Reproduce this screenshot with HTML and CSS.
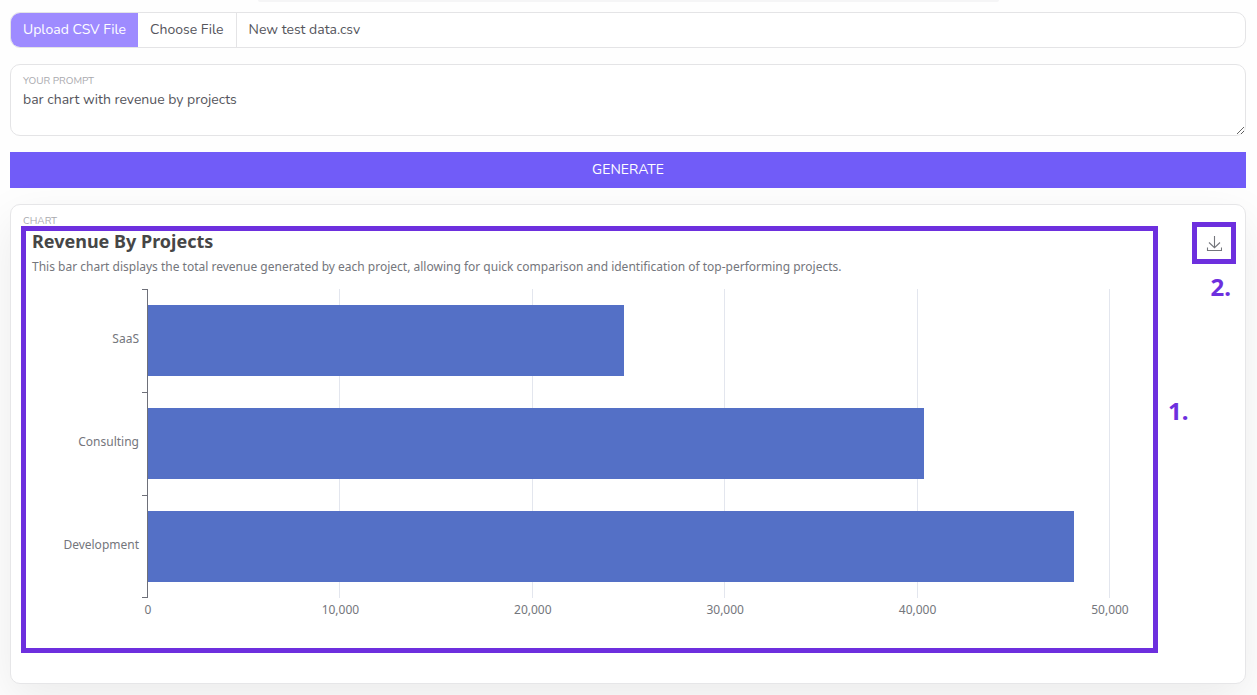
FILE: index.html
```html
<!DOCTYPE html>
<html lang="en">
<head>
<meta charset="utf-8">
<meta name="viewport" content="width=device-width, initial-scale=1">
<title>Chart generator</title>
<link rel="stylesheet" href="styles.css">
</head>
<body>
<div class="top-edge"></div>
<main class="page">
  <div class="upload">
    <label class="upload-label" for="csv">Upload CSV File</label>
    <input class="upload-input" type="file" id="csv" accept=".csv">
    <button class="upload-button" type="button">Choose File</button>
    <span class="upload-name">New test data.csv</span>
  </div>
  <div class="prompt">
    <label class="caption" for="prompt">YOUR PROMPT</label>
    <textarea class="prompt-text" id="prompt">bar chart with revenue by projects</textarea>
  </div>
  <button class="generate" type="button">GENERATE</button>
  <section class="card">
    <span class="caption card-caption">CHART</span>
    <div class="card-body">
      <figure class="chart">
        <h2 class="chart-title">Revenue By Projects</h2>
        <p class="chart-note">This bar chart displays the total revenue generated by each project, allowing for quick comparison and identification of top-performing projects.</p>
        <div class="plot">
          <div class="names">
            <span class="name">SaaS</span>
            <span class="name">Consulting</span>
            <span class="name">Development</span>
          </div>
          <div class="area">
            <div class="lines"><i></i><i></i><i></i><i></i><i></i></div>
            <div class="bars">
              <div class="bar" style="width:49.5%"></div>
              <div class="bar" style="width:80.7%"></div>
              <div class="bar" style="width:96.3%"></div>
            </div>
          </div>
          <div class="scale">
            <span>0</span><span>10,000</span><span>20,000</span><span>30,000</span><span>40,000</span><span>50,000</span>
          </div>
        </div>
      </figure>
      <div class="side">
        <button class="download" type="button" aria-label="Download chart">
          <svg width="16" height="18" viewBox="0 0 16 18" fill="none" stroke="#74767c" stroke-width="1.1"><path d="M8.500 2v11.500M3 8.500l5.500 5.200L14 8.500M1.500 13.500v3h14v-3"/></svg>
        </button>
        <strong class="mark mark-two">2.</strong>
        <strong class="mark mark-one">1.</strong>
      </div>
    </div>
  </section>
</main>
</body>
</html>
```
FILE: styles.css
```css
* { box-sizing: border-box; }
body {
  margin: 0;
  background: #fefefe;
  color: #55555c;
  font: 14px/20px Nunito, "Open Sans", sans-serif;
  overflow: hidden;
}
button, textarea { font: inherit; color: inherit; }
.top-edge {
  width: 59%;
  height: 2px;
  margin: 0 auto;
  border-radius: 0 0 4px 4px;
  background: #f5f5f6;
}
.page {
  display: flex;
  flex-direction: column;
  gap: 16px;
  padding: 10px 11px 11px 10px;
}
.upload {
  display: flex;
  height: 36px;
  border: 1px solid #e4e4e6;
  border-radius: 10px;
  background: #fff;
  overflow: hidden;
  position: relative;
}
.upload-label {
  padding: 7px 12px;
  background: #9e8bff;
  color: #fff;
}
.upload-input {
  position: absolute;
  width: 1px;
  height: 1px;
  opacity: 0;
}
.upload-button {
  padding: 0 12px;
  border: 0;
  border-right: 1px solid #e4e4e6;
  background: #fff;
}
.upload-name { padding: 7px 12px; }
.prompt {
  display: flex;
  flex-direction: column;
  height: 72px;
  padding-top: 9px;
  border: 1px solid #e4e4e6;
  border-radius: 10px;
  background: #fff;
}
.caption {
  padding-left: 12px;
  color: #a9a9ae;
  font-size: 10px;
  line-height: 14px;
}
.prompt-text {
  flex: 1;
  width: 100%;
  padding: 2px 12px;
  border: 0;
  outline: 0;
  background: transparent;
  resize: vertical;
}
.generate {
  height: 36px;
  padding: 0;
  border: 0;
  background: #715cf8;
  color: #fff;
}
.card {
  padding: 9px 9px 30px 10px;
  border: 1px solid #e6e6e8;
  border-radius: 10px;
  background: #fff;
  box-shadow: 0 16px 48px rgba(0, 0, 0, .08);
}
.card-caption {
  display: block;
  height: 8px;
  padding-left: 2px;
}
.card-body { display: flex; }
.chart {
  flex: 1;
  height: 427px;
  margin: 4px 0 0;
  border: 5px solid #6d2fde;
  color: #74767c;
  font: 12px/16px "Noto Sans", sans-serif;
}
.chart-title {
  margin: 0 0 0 6px;
  color: #464646;
  font-size: 18px;
  line-height: 20px;
}
.chart-note { margin: 8px 0 14px 6px; }
.plot {
  display: grid;
  grid-template-columns: 122px 1fr;
  grid-template-rows: 309px auto;
  margin: 0 43px 0 0;
}
.names {
  display: grid;
  grid-template-rows: repeat(3, 1fr);
  border-right: 1px solid #6e7079;
}
.name {
  display: flex;
  align-items: center;
  justify-content: flex-end;
  padding: 0 8px 4px 0;
  background: linear-gradient(#6e7079, #6e7079) right top / 5px 1px no-repeat;
}
.name:last-child {
  background:
    linear-gradient(#6e7079, #6e7079) right top / 5px 1px no-repeat,
    linear-gradient(#6e7079, #6e7079) right bottom / 5px 1px no-repeat;
}
.area { display: grid; }
.lines, .bars { grid-area: 1 / 1; display: grid; }
.lines { grid-template-columns: repeat(5, 1fr); }
.lines i { border-right: 1px solid #e3e6ee; }
.bars { grid-template-rows: repeat(3, 1fr); align-items: center; }
.bar { height: 71px; background: #5470c6; }
.scale {
  grid-column: 2;
  display: flex;
  justify-content: space-between;
  padding-top: 4px;
}
.scale span {
  display: flex;
  justify-content: center;
  width: 0;
}
.side {
  display: flex;
  flex-direction: column;
  align-items: flex-end;
  width: 78px;
}
.download {
  display: flex;
  align-items: center;
  justify-content: center;
  width: 44px;
  height: 42px;
  padding: 0;
  border: 5px solid #6d2fde;
  background: #fff;
}
.mark {
  color: #6d2fde;
  font: bold 24px/32px "Noto Sans", sans-serif;
}
.mark-two { margin: 7px 5px 0 0; }
.mark-one { align-self: flex-start; margin: 92px 0 0 10px; }
```
